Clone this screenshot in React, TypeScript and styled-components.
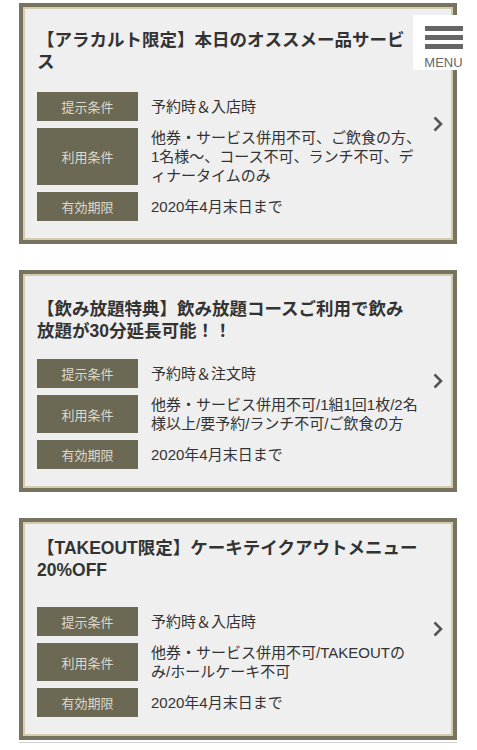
import React from "react";
import styled, { createGlobalStyle } from "styled-components";

const GlobalStyle = createGlobalStyle`
  body {
    margin: 0;
    background: #fff;
    font-family: "Liberation Sans", "Noto Sans CJK JP", sans-serif;
    color: #333;
  }
`;

interface Coupon {
  title: string[];
  lead: number;
  rows: { label: string; value: string[] }[];
}

const coupons: Coupon[] = [
  {
    title: ["【アラカルト限定】本日のオススメー品サービ", "ス"],
    lead: 22,
    rows: [
      { label: "提示条件", value: ["予約時＆入店時"] },
      {
        label: "利用条件",
        value: ["他券・サービス併用不可、ご飲食の方、", "1名様〜、コース不可、ランチ不可、デ", "ィナータイムのみ"],
      },
      { label: "有効期限", value: ["2020年4月末日まで"] },
    ],
  },
  {
    title: ["【飲み放題特典】飲み放題コースご利用で飲み", "放題が30分延長可能！！"],
    lead: 24,
    rows: [
      { label: "提示条件", value: ["予約時＆注文時"] },
      {
        label: "利用条件",
        value: ["他券・サービス併用不可/1組1回1枚/2名", "様以上/要予約/ランチ不可/ご飲食の方"],
      },
      { label: "有効期限", value: ["2020年4月末日まで"] },
    ],
  },
  {
    title: ["【TAKEOUT限定】ケーキテイクアウトメニュー", "20%OFF"],
    lead: 15,
    rows: [
      { label: "提示条件", value: ["予約時＆入店時"] },
      { label: "利用条件", value: ["他券・サービス併用不可/TAKEOUTの", "み/ホールケーキ不可"] },
      { label: "有効期限", value: ["2020年4月末日まで"] },
    ],
  },
];

const Page = styled.div`
  padding-top: 3px;
`;

const Card = styled.a`
  position: relative;
  display: block;
  margin: 0 20px 26px 19px;
  padding: 0 21px 19px 14px;
  border: 4px solid #767360;
  box-shadow: inset 0 0 0 2px #d3cdae;
  background: #efefef;
  color: #333;
  text-decoration: none;
  &:last-of-type {
    margin-bottom: 0;
  }
`;

const Title = styled.h2<{ $lead: number }>`
  margin: ${(p) => p.$lead}px 0 ${(p) => 41 - p.$lead}px;
  font-size: 17.5px;
  line-height: 22px;
  font-weight: bold;
  color: #333;
  white-space: nowrap;
`;

const Rows = styled.div`
  display: flex;
  flex-direction: column;
  gap: 7px;
`;

const Row = styled.div`
  display: grid;
  grid-template-columns: 101px 1fr;
  column-gap: 13px;
`;

const Label = styled.div`
  display: flex;
  align-items: center;
  justify-content: center;
  min-height: 29px;
  background: #6b6853;
  color: #dcd9cc;
  font-size: 13px;
`;

const Value = styled.div`
  align-self: center;
  font-size: 15px;
  line-height: 19px;
  color: #333;
  white-space: nowrap;
`;

const Arrow = styled.svg`
  position: absolute;
  right: 10px;
  top: 50%;
  transform: translateY(-50%);
`;

const Divider = styled.div`
  height: 1px;
  margin: 2px 20px 0 19px;
  background: #cfcfcf;
`;

const MenuButton = styled.button`
  position: fixed;
  top: 15px;
  right: 0;
  width: 64px;
  height: 55px;
  padding: 11px 0 0;
  border: 0;
  background: #fff;
  display: flex;
  flex-direction: column;
  align-items: center;
  cursor: pointer;
`;

const Bar = styled.span`
  display: block;
  width: 38px;
  height: 5px;
  margin-bottom: 4px;
  margin-right: 3px;
  background: #666;
`;

const MenuText = styled.span`
  margin-top: 3px;
  margin-right: 3px;
  font-family: "Liberation Sans", Arial, sans-serif;
  font-size: 13px;
  line-height: 13px;
  color: #666;
`;

function App() {
  return (
    <Page>
      <GlobalStyle />
      {coupons.map((c, i) => (
        <Card key={i} href="#">
          <Title $lead={c.lead}>
            {c.title.map((line, j) => (
              <React.Fragment key={j}>
                {j > 0 && <br />}
                {line}
              </React.Fragment>
            ))}
          </Title>
          <Rows>
            {c.rows.map((r) => (
              <Row key={r.label}>
                <Label>{r.label}</Label>
                <Value>
                  {r.value.map((line, j) => (
                    <React.Fragment key={j}>
                      {j > 0 && <br />}
                      {line}
                    </React.Fragment>
                  ))}
                </Value>
              </Row>
            ))}
          </Rows>
          <Arrow width="10" height="16" viewBox="0 0 10 16">
            <polyline points="1.5,1.5 8,8 1.5,14.5" fill="none" stroke="#555" strokeWidth="2.6" />
          </Arrow>
        </Card>
      ))}
      <Divider />
      <MenuButton>
        <Bar />
        <Bar />
        <Bar />
        <MenuText>MENU</MenuText>
      </MenuButton>
    </Page>
  );
}

export default App;
